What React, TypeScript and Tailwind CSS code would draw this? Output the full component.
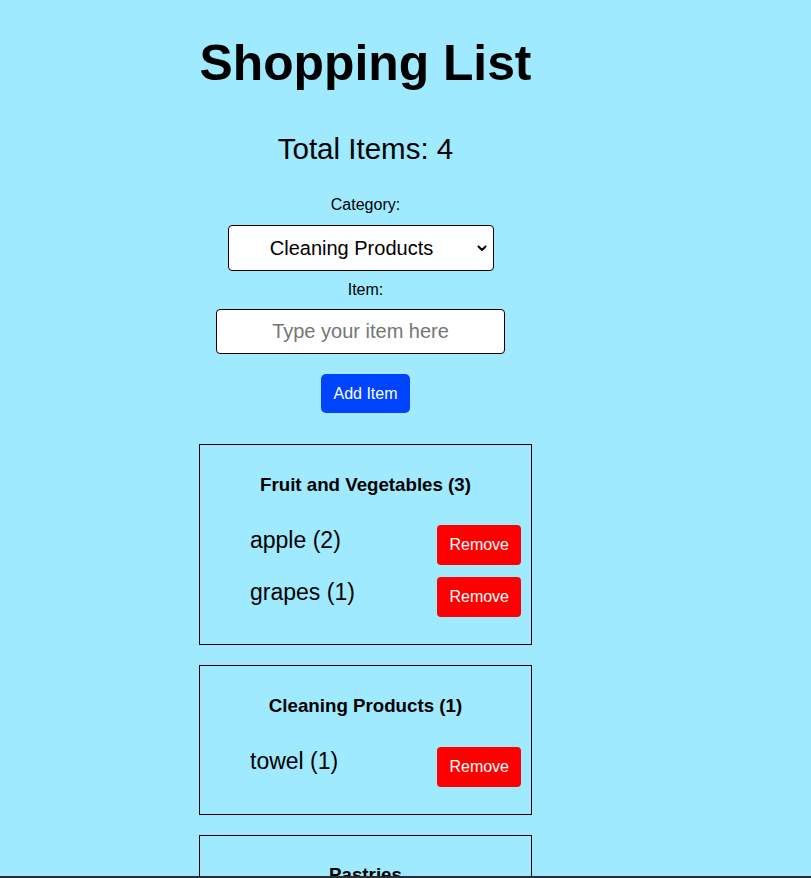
import React, { useState } from "react";

type Item = { name: string; qty: number };
type Lists = Record<string, Item[]>;

const CATEGORIES = ["Fruit and Vegetables", "Cleaning Products", "Pastries", "Dairy", "Meat"];

export default function App() {
  const [category, setCategory] = useState("Cleaning Products");
  const [text, setText] = useState("");
  const [lists, setLists] = useState<Lists>({
    "Fruit and Vegetables": [
      { name: "apple", qty: 2 },
      { name: "grapes", qty: 1 },
    ],
    "Cleaning Products": [{ name: "towel", qty: 1 }],
    Pastries: [],
  });

  const total = Object.values(lists).reduce((s, l) => s + l.reduce((a, i) => a + i.qty, 0), 0);

  const add = () => {
    const name = text.trim();
    if (!name) return;
    setLists((prev) => {
      const cur = prev[category] ? [...prev[category]] : [];
      const idx = cur.findIndex((i) => i.name === name);
      if (idx >= 0) cur[idx] = { ...cur[idx], qty: cur[idx].qty + 1 };
      else cur.push({ name, qty: 1 });
      return { ...prev, [category]: cur };
    });
    setText("");
  };

  const remove = (cat: string, name: string) => {
    setLists((prev) => ({ ...prev, [cat]: prev[cat].filter((i) => i.name !== name) }));
  };

  return (
    <div className="min-h-screen bg-[#9feaff] text-black font-['Liberation_Sans',Arial,sans-serif] leading-[normal] pl-[199px] pb-[40px]">
      <div className="w-[333px] flex flex-col items-center">
        <h1 className="mt-[34px] text-[49.8px] font-bold leading-[normal] whitespace-nowrap">Shopping List</h1>
        <h2 className="mt-[40px] text-[29.5px] leading-[normal] whitespace-nowrap">Total Items: {total}</h2>

        <label className="mt-[30px] text-[16px]" htmlFor="cat">Category:</label>
        <div className="relative mt-[10.6px] mr-[10px]">
          <select
            id="cat"
            value={category}
            onChange={(e) => setCategory(e.target.value)}
            className="appearance-none bg-white border border-black rounded-[4px] h-[46px] w-[266px] text-[20px] text-center [text-align-last:center] pl-[4px] pr-[22px] text-black outline-none"
          >
            {CATEGORIES.map((c) => (
              <option key={c} value={c}>{c}</option>
            ))}
          </select>
          <svg className="pointer-events-none absolute right-[7px] top-[20px]" width="10" height="7" viewBox="0 0 10 7">
            <path d="M1.5 1.5 L5 5 L8.5 1.5" fill="none" stroke="#000" strokeWidth="2" strokeLinecap="round" strokeLinejoin="round" />
          </svg>
        </div>

        <label className="mt-[10.3px] text-[16px]" htmlFor="item">Item:</label>
        <input
          id="item"
          value={text}
          onChange={(e) => setText(e.target.value)}
          placeholder="Type your item here"
          className="mt-[10px] mr-[10px] w-[289px] h-[45px] bg-white border border-black rounded-[4px] text-[20px] text-center placeholder:text-[#757575] outline-none"
        />

        <button
          onClick={add}
          className="mt-[20.3px] h-[39px] px-[12.5px] bg-[#0044ff] text-white text-[16px] rounded-[5px]"
        >
          Add Item
        </button>

        <div className="mt-[30.7px] w-full flex flex-col gap-[20px]">
          {Object.entries(lists).map(([cat, items]) => (
            <div key={cat} className="border border-black p-[10px]">
              <h3 className="mt-[18.72px] mb-[18.72px] text-[18.72px] font-bold text-center leading-[normal]">
                {cat}{items.length > 0 ? ` (${items.reduce((a, i) => a + i.qty, 0)})` : ""}
              </h3>
              <ul className="pl-[40px] pt-[11px] pb-[17px] flex flex-col gap-[12px]">
                {items.map((i) => (
                  <li key={i.name} className="flex items-start justify-between">
                    <span className="mt-[1.5px] text-[23px] leading-[normal]">{i.name} ({i.qty})</span>
                    <button
                      onClick={() => remove(cat, i.name)}
                      className="h-[40px] px-[12px] bg-[#ff0000] text-white text-[16px] rounded-[4px]"
                    >
                      Remove
                    </button>
                  </li>
                ))}
              </ul>
            </div>
          ))}
        </div>
      </div>
      <div className="fixed inset-x-0 bottom-0 h-[2px] bg-[#2d2d2d]" />
    </div>
  );
}
